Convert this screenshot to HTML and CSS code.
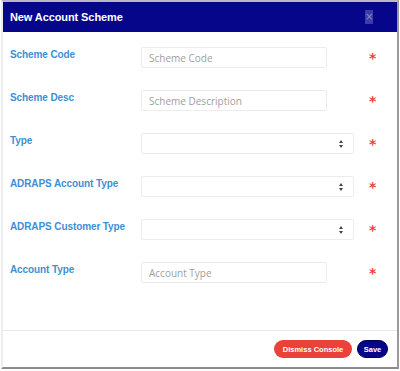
FILE: index.html
```html
<!DOCTYPE html>
<html lang="en">
<head>
    <meta charset="UTF-8">
    <meta name="viewport" content="width=device-width, initial-scale=1.0">
    <title>New Account Scheme</title>
    <link rel="stylesheet" href="styles.css">
</head>
<body>
    <div class="modal">
        <div class="modal-header">
            <h4>New Account Scheme</h4>
            <button class="close-btn">&times;</button>
        </div>

        <div class="modal-body">
            <div class="form-row">
                <label>Scheme Code</label>
                <input type="text" placeholder="Scheme Code">
                <span class="required">*</span>
            </div>
            <div class="form-row">
                <label>Scheme Desc</label>
                <input type="text" placeholder="Scheme Description">
                <span class="required">*</span>
            </div>
            <div class="form-row">
                <label>Type</label>
                <div class="select"><span class="arrows"></span></div>
                <span class="required">*</span>
            </div>
            <div class="form-row">
                <label>ADRAPS Account Type</label>
                <div class="select"><span class="arrows"></span></div>
                <span class="required">*</span>
            </div>
            <div class="form-row">
                <label>ADRAPS Customer Type</label>
                <div class="select"><span class="arrows"></span></div>
                <span class="required">*</span>
            </div>
            <div class="form-row">
                <label>Account Type</label>
                <input type="text" placeholder="Account Type">
                <span class="required">*</span>
            </div>
        </div>

        <div class="modal-footer">
            <button class="btn btn-dismiss">Dismiss Console</button>
            <button class="btn btn-save">Save</button>
        </div>
    </div>
</body>
</html>
```

FILE: styles.css
```css
:root {
    --navy: #06068a;
    --label-color: #3d8fd6;
    --star-color: #e8463e;
    --border-color: #ececec;
}

* {
    margin: 0;
    padding: 0;
    box-sizing: border-box;
}

body {
    font-family: 'Liberation Sans', Arial, sans-serif;
    background: #ffffff;
    width: 400px;
    height: 371px;
}

.modal {
    width: 398px;
    margin-left: 1px;
    height: 369px;
    background: #ffffff;
    border-top: 2px solid #b8b8c0;
    border-left: 2px solid #ededed;
    border-right: 2px solid #9a9a9a;
    border-bottom: 2px solid #8a8a8a;
    display: flex;
    flex-direction: column;
}

.modal-header {
    height: 30px;
    background: var(--navy);
    display: flex;
    align-items: center;
    justify-content: space-between;
    padding: 0 24px 0 7px;
}

.modal-header h4 {
    color: #ffffff;
    font-size: 11px;
    font-weight: 700;
    letter-spacing: -0.1px;
}

.close-btn {
    width: 8px;
    height: 14px;
    border: none;
    background: #3c3ca6;
    color: #8a8ac8;
    font-size: 10px;
    line-height: 14px;
    font-family: 'DejaVu Sans', sans-serif;
}

.modal-body {
    flex: 1;
    padding: 15px 0 0 7px;
}

.form-row {
    display: grid;
    grid-template-columns: 131px 213px 1fr;
    align-items: center;
    height: 21px;
    margin-bottom: 22px;
}

.form-row label {
    color: var(--label-color);
    font-size: 10px;
    font-weight: 700;
    margin-top: -6px;
    letter-spacing: -0.1px;
}

.form-row input {
    width: 186px;
    height: 21px;
    border: 1px solid var(--border-color);
    border-radius: 2px;
    padding: 0 7px;
    font-family: 'Open Sans', sans-serif;
    font-size: 10px;
    outline: none;
}

.form-row input::placeholder {
    color: #a0a0a0;
}

.select {
    width: 213px;
    height: 21px;
    border: 1px solid var(--border-color);
    border-radius: 2px;
    position: relative;
}

.arrows {
    position: absolute;
    right: 9px;
    top: 6px;
    width: 5px;
    height: 8px;
}

.arrows::before,
.arrows::after {
    content: '';
    position: absolute;
    left: 0;
    border-left: 2.5px solid transparent;
    border-right: 2.5px solid transparent;
}

.arrows::before {
    top: 0;
    border-bottom: 3px solid #444;
}

.arrows::after {
    bottom: 0;
    border-top: 3px solid #444;
}

.required {
    color: var(--star-color);
    font-size: 14px;
    font-weight: 700;
    padding-left: 15px;
    margin-top: 1px;
    font-family: 'DejaVu Sans', sans-serif;
}

.modal-footer {
    height: 37px;
    border-top: 1px solid #eaeaea;
    display: flex;
    justify-content: flex-end;
    align-items: center;
    gap: 5px;
    padding-right: 9px;
}

.btn {
    height: 18px;
    border: none;
    border-radius: 9px;
    color: #ffffff;
    font-family: 'Liberation Sans', Arial, sans-serif;
    font-size: 7.5px;
    font-weight: 700;
}

.btn-dismiss {
    width: 78px;
    background: #ea4238;
}

.btn-save {
    width: 31px;
    background: var(--navy);
    border: 1px solid #000050;
}
```
